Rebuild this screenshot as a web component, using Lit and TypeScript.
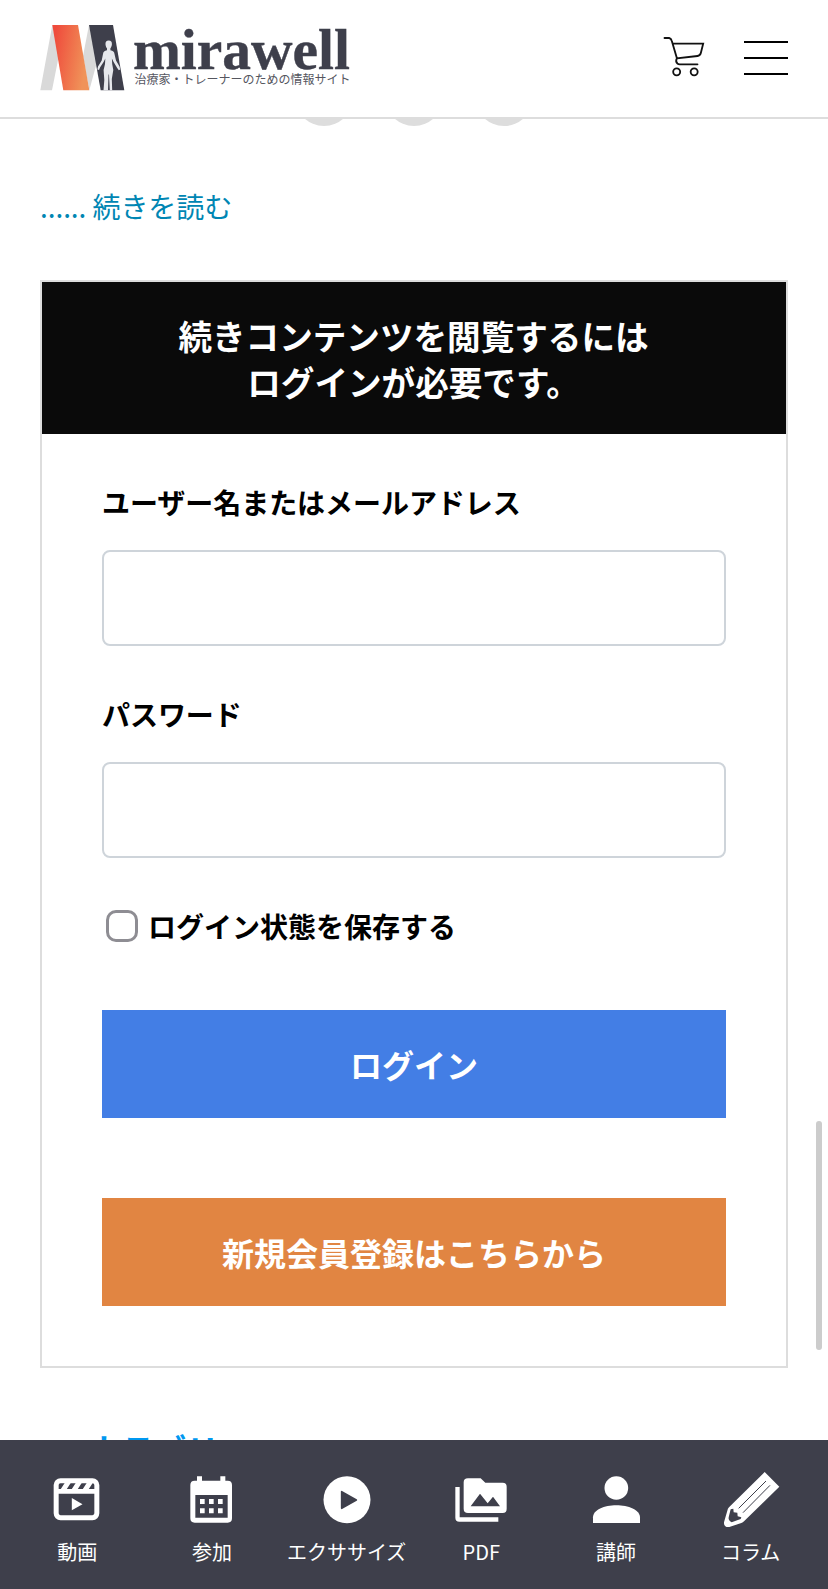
import { LitElement, html, css, svg } from "lit";
import { customElement } from "lit/decorators.js";

const NAV = [
  {
    label: "動画",
    box: "51.500 180 180 180",
    art: svg`<rect x="79" y="212" width="122" height="111" rx="13" fill="none" stroke="#fff" stroke-width="15"/>
      <path d="M80 237H200V251H80Z"/>
      <path d="M93 237L106 217H124L111 237ZM126 237L139 217H157L144 237ZM159 237L172 217H190L177 237Z"/>
      <path d="M126 264V301L158 282.500Z"/>`,
  },
  {
    label: "参加",
    box: "456 180 180 180",
    art: svg`<path fill-rule="evenodd" d="M501 199H516V212H571V199H586V212H593Q606 212 606 225V325Q606 338 593 338H494Q481 338 481 325V225Q481 212 494 212H501ZM496 255V323H593V255Z"/>
      <path d="M510 267h14v15h-14zM537 267h14v15h-14zM564 267h14v15h-14zM510 295h14v15h-14zM537 295h14v15h-14zM564 295h14v15h-14z"/>`,
  },
  {
    label: "エクササイズ",
    box: "111 120 180 180",
    art: svg`<circle cx="201" cy="209.500" r="70.500"/>
      <path d="M185 185V235L229 210Z" fill="#3e3f4b" stroke="#3e3f4b" stroke-width="5" stroke-linejoin="round"/>`,
  },
  {
    label: "PDF",
    box: "514 120 180 180",
    art: svg`<path fill-rule="evenodd" d="M565 145H603L617 158H669Q681 158 681 170V236Q681 249 669 249H565Q552 249 552 236V157Q552 145 565 145ZM573 229H661L640 200L624 220L601 191Z"/>
      <path d="M527 171H540V262H656V275H539Q527 275 527 263Z"/>`,
  },
  {
    label: "講師",
    box: "78 120 180 180",
    art: svg`<circle cx="169" cy="174" r="35.500"/>
      <path d="M99 279V262C99 240 133 226 169 226S240 240 240 262V279Z"/>`,
  },
  {
    label: "コラム",
    box: "482 120 180 180",
    art: svg`<path d="M613 126L657 170L551 274Q548 277 543 279L507 291Q490 293 491 277L501 242Q502 236 506 232Z"/>
      <path d="M535 235L617 153M548 248L629 166" fill="none" stroke="#3e3f4b" stroke-width="3"/>
      <path d="M511 238L519 236L520 247L531 248L532 259L543 262L541 267L514 277Q503 271 505 262Z" fill="#3e3f4b"/>`,
  },
];

@customElement("app-root")
export class AppRoot extends LitElement {
  static styles = css`
    :host {
      display: flex;
      flex-direction: column;
      position: relative;
      width: 828px;
      height: 1589px;
      overflow: hidden;
      background: #fff;
      color: #000;
      font: 28px/40px "Noto Sans CJK JP", sans-serif;
    }
    * { box-sizing: border-box; }
    svg { display: block; }
    .header {
      flex: none;
      display: flex;
      align-items: flex-start;
      height: 119px;
      padding: 20px 40px 0;
      border-bottom: 2px solid #ddd;
    }
    .logo { overflow: visible; }
    .cart { margin: 16px 39px 0 auto; }
    .burger { display: grid; gap: 14px; width: 44px; margin-top: 21px; }
    .burger i { height: 2px; background: #000; }
    .main { flex: 1; min-height: 0; overflow: hidden; padding: 0 40px; }
    .dots { display: flex; justify-content: center; gap: 32px; margin-top: -51px; }
    .dots i { width: 58px; height: 58px; border-radius: 50%; background: #ddd; }
    .more { display: block; margin-top: 60px; color: #0086b3; text-decoration: none; letter-spacing: -0.070px; }
    .card { height: 1088px; margin-top: 54px; border: 2px solid #ddd; }
    .title {
      margin: 0;
      height: 152px;
      padding: 31px 1px 0 0;
      background: #0a0a0a;
      color: #fff;
      font-size: 33.6px;
      font-weight: 700;
      line-height: 46px;
      text-align: center;
    }
    .form { display: flex; flex-direction: column; padding: 48px 60px 0; font-weight: 700; }
    .label { height: 40px; letter-spacing: -0.050px; }
    .input {
      height: 96px;
      margin: 28px 0 48px;
      border: 2px solid #ced4da;
      border-radius: 8px;
      background: #fff;
      outline: none;
    }
    .remember { display: flex; align-items: center; height: 40px; padding-left: 4px; }
    .check {
      appearance: none;
      width: 32px;
      height: 32px;
      margin: 0 10px 0 0;
      border: 3px solid #8e8d93;
      border-radius: 10px;
      background: #fff;
    }
    .btn {
      height: 108px;
      padding: 0;
      border: 0;
      color: #fff;
      font: inherit;
      font-size: 32px;
      text-align: center;
    }
    .login { margin-top: 64px; background: #437ee5; }
    .signup { margin-top: 80px; background: #e18542; }
    .heading { margin: 57px 0 0 49px; font-size: 32.5px; line-height: 48px; color: #0098f0; }
    .nav {
      flex: none;
      display: grid;
      grid-template-columns: repeat(6, 134.67px);
      justify-content: center;
      height: 149px;
      padding-top: 30px;
      background: #3e3f4b;
      color: #fff;
      font-size: 20px;
      line-height: 30px;
    }
    .item { display: flex; flex-direction: column; align-items: center; gap: 7px; white-space: nowrap; }
    .thumb {
      position: absolute;
      right: 6px;
      top: 1121px;
      width: 6px;
      height: 229px;
      border-radius: 3px;
      background: #ccc;
    }
    .brand { font: 700 57px "Liberation Serif", serif; }
    .tagline { font: 400 12px "Noto Sans CJK JP", sans-serif; }
  `;

  render() {
    return html`
      <header class="header">
        <svg class="logo" width="314" height="75" viewBox="40 20 314 75">
          <defs>
            <linearGradient id="flame" x1="0" y1="0" x2="1" y2="0.300">
              <stop offset="0.100" stop-color="#ef4b3c" />
              <stop offset="1" stop-color="#f09359" />
            </linearGradient>
          </defs>
          <path d="M52.300 25L40.300 90.300H52L59 55ZM89 25L83 56L89.300 90.300L97 62Z" fill="#d9d9d9" />
          <path d="M52.300 25H78L89.300 90.300H63.300Z" fill="url(#flame)" />
          <path d="M89 25H113L124.300 90.300H100.700Z" fill="#3e3f4b" />
          <path d="M108.700 40.500C111 40.500 112.200 42 111.900 44.500C111.700 46.500 111 47.500 110.400 48.300V50.200C113 50.700 114.300 51.500 114.500 54L116 60.500L119.500 66.500L120.200 69.500L118.800 70.300L117.200 68L113.600 62L111.900 58.500L112.200 64L113.300 70L111.800 79L112.200 90.300H109.800L109 74.500L108.500 74.500L108 90.300H103.500L104.300 80L103.600 70L105 64L105.300 58.500L103.600 62L100 67.500L99 70L97.400 69.500L98 66.500L101.700 60.500L103 54C103.200 51.500 104.500 50.700 107 50.200V48.300C106.300 47.500 105.700 46.500 105.500 44.500C105.200 42 106.400 40.500 108.700 40.500Z" fill="#e6e8ec" />
          <text class="brand" x="133" y="68.900" textLength="217" lengthAdjust="spacingAndGlyphs"
            fill="#3e3f4b" stroke="#3e3f4b" stroke-width="0.400">mirawell</text>
          <text class="tagline" x="134.500" y="84" textLength="216" fill="#55565f">治療家・トレーナーのための情報サイト</text>
        </svg>
        <svg class="cart" width="42" height="41" viewBox="69.500 48 126 123" fill="none" stroke="#111" stroke-width="5.500" stroke-linecap="round">
          <path d="M74 54H88Q94 55 96 63L111 114M98 70L190 71L183 99Q181 107 173 108L111 115Q106 124 113 131Q115 133 120 133H173" />
          <circle cx="110.500" cy="155.500" r="10.500" />
          <circle cx="163" cy="155.500" r="10.500" />
        </svg>
        <div class="burger"><i></i><i></i><i></i></div>
      </header>

      <main class="main">
        <div class="dots"><i></i><i></i><i></i></div>
        <a class="more">...... 続きを読む</a>
        <section class="card">
          <h2 class="title">続きコンテンツを閲覧するには<br />ログインが必要です。</h2>
          <div class="form">
            <label class="label" for="user">ユーザー名またはメールアドレス</label>
            <input class="input" id="user" type="text" />
            <label class="label" for="pass">パスワード</label>
            <input class="input" id="pass" type="password" />
            <label class="remember"><input class="check" type="checkbox" />ログイン状態を保存する</label>
            <button class="btn login">ログイン</button>
            <button class="btn signup">新規会員登録はこちらから</button>
          </div>
        </section>
        <h2 class="heading">カテゴリー</h2>
      </main>

      <nav class="nav">
        ${NAV.map(
          (n) => html`<a class="item">
            <svg width="60" height="60" viewBox=${n.box} fill="#fff">${n.art}</svg>
            <span>${n.label}</span>
          </a>`
        )}
      </nav>
      <div class="thumb"></div>
    `;
  }
}
